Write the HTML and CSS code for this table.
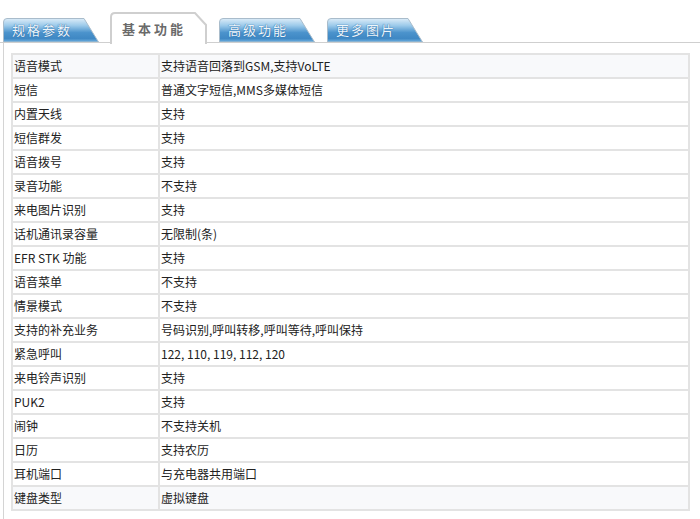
FILE: index.html
```html
<!DOCTYPE html>
<html lang="zh-CN">
<head>
<meta charset="utf-8">
<title>基本功能</title>
<link rel="stylesheet" href="styles.css">
</head>
<body>
<div class="page">
  <div class="tabs">
    <div class="tab">
      <svg class="tab-bg" width="96" height="24" viewBox="0 0 96 24"><use href="#tabshape"/></svg>
      <span class="tab-label">规格参数</span>
    </div>
    <div class="tab tab-active">
      <svg class="tab-bg" width="97" height="32" viewBox="0 0 97 32">
        <path d="M1 32 V5 Q1 1 5 1 H85 L96 13 V32" fill="#fff" stroke="#cfcfcf" stroke-width="2"/>
      </svg>
      <span class="tab-label">基本功能</span>
    </div>
    <div class="tab">
      <svg class="tab-bg" width="96" height="24" viewBox="0 0 96 24"><use href="#tabshape"/></svg>
      <span class="tab-label">高级功能</span>
    </div>
    <div class="tab">
      <svg class="tab-bg" width="96" height="24" viewBox="0 0 96 24"><use href="#tabshape"/></svg>
      <span class="tab-label">更多图片</span>
    </div>
    <svg class="defs" width="0" height="0">
      <defs>
        <linearGradient id="tabgrad" x1="0" y1="0" x2="0" y2="1">
          <stop offset="0" stop-color="#dcecf8"/>
          <stop offset="0.3" stop-color="#9ccaea"/>
          <stop offset="0.6" stop-color="#4b93cc"/>
          <stop offset="0.85" stop-color="#3f88c4"/>
          <stop offset="1" stop-color="#6fb0e0"/>
        </linearGradient>
        <path id="tabshape" d="M0.5 24 V4 Q0.5 0.5 4 0.5 H81 L95.5 24 Z" fill="url(#tabgrad)" stroke="#a9bccb" stroke-width="1"/>
      </defs>
    </svg>
  </div>
  <div class="panel">
    <table class="spec">
      <tbody>
        <tr class="shade"><td class="k">语音模式</td><td>支持语音回落到GSM,支持VoLTE</td></tr>
        <tr><td class="k">短信</td><td>普通文字短信,MMS多媒体短信</td></tr>
        <tr><td class="k">内置天线</td><td>支持</td></tr>
        <tr><td class="k">短信群发</td><td>支持</td></tr>
        <tr><td class="k">语音拨号</td><td>支持</td></tr>
        <tr><td class="k">录音功能</td><td>不支持</td></tr>
        <tr><td class="k">来电图片识别</td><td>支持</td></tr>
        <tr><td class="k">话机通讯录容量</td><td>无限制(条)</td></tr>
        <tr><td class="k">EFR STK 功能</td><td>支持</td></tr>
        <tr><td class="k">语音菜单</td><td>不支持</td></tr>
        <tr><td class="k">情景模式</td><td>不支持</td></tr>
        <tr><td class="k">支持的补充业务</td><td>号码识别,呼叫转移,呼叫等待,呼叫保持</td></tr>
        <tr><td class="k">紧急呼叫</td><td>122, 110, 119, 112, 120</td></tr>
        <tr><td class="k">来电铃声识别</td><td>支持</td></tr>
        <tr><td class="k">PUK2</td><td>支持</td></tr>
        <tr><td class="k">闹钟</td><td>不支持关机</td></tr>
        <tr><td class="k">日历</td><td>支持农历</td></tr>
        <tr><td class="k">耳机端口</td><td>与充电器共用端口</td></tr>
        <tr class="shade"><td class="k">键盘类型</td><td>虚拟键盘</td></tr>
      </tbody>
    </table>
  </div>
</div>
</body>
</html>
```

FILE: styles.css
```css
html, body {
  margin: 0;
  padding: 0;
  background: #fff;
}

body {
  font-family: "Noto Sans CJK SC", "Liberation Sans", sans-serif;
  font-size: 12px;
  color: #222;
}

.page {
  width: 700px;
  height: 519px;
  overflow: hidden;
}

.tabs {
  display: flex;
  align-items: flex-end;
  gap: 12px;
  height: 42px;
  padding-left: 3px;
  border-bottom: 1px solid #cfcfcf;
}

.defs {
  position: absolute;
}

.tab {
  position: relative;
  width: 96px;
  height: 24px;
  display: flex;
  align-items: center;
}

.tab-active {
  width: 97px;
  height: 31px;
  margin-bottom: -1px;
  margin-left: -1px;
}

.tab-bg {
  position: absolute;
  left: 0;
  top: 0;
}

.tab-label {
  position: relative;
  padding-left: 9px;
  font-size: 13px;
  letter-spacing: 2px;
  color: #eef6fc;
  text-shadow: 0 0 1px #2f6fa8, 0 0 1px #2f6fa8;
  line-height: 24px;
}

.tab-active .tab-label {
  padding-left: 12px;
  padding-top: 2px;
  color: #6a6a6a;
  font-weight: bold;
  text-shadow: none;
  letter-spacing: 3px;
}

.panel {
  margin-left: 3px;
  border-left: 1px solid #d4d4d4;
  height: 476px;
  padding: 10px 0 0 7px;
}

.spec {
  border-collapse: collapse;
  width: 679px;
  border: 2px solid #dcdcdc;
}

.spec td {
  height: 22px;
  padding: 0 0 0 1px;
  border: 2px solid #e3e3e3;
  line-height: 20px;
  vertical-align: middle;
  white-space: nowrap;
}

.spec td.k {
  width: 144px;
}

.spec tr.shade td {
  background: #f8f9fb;
}
```
